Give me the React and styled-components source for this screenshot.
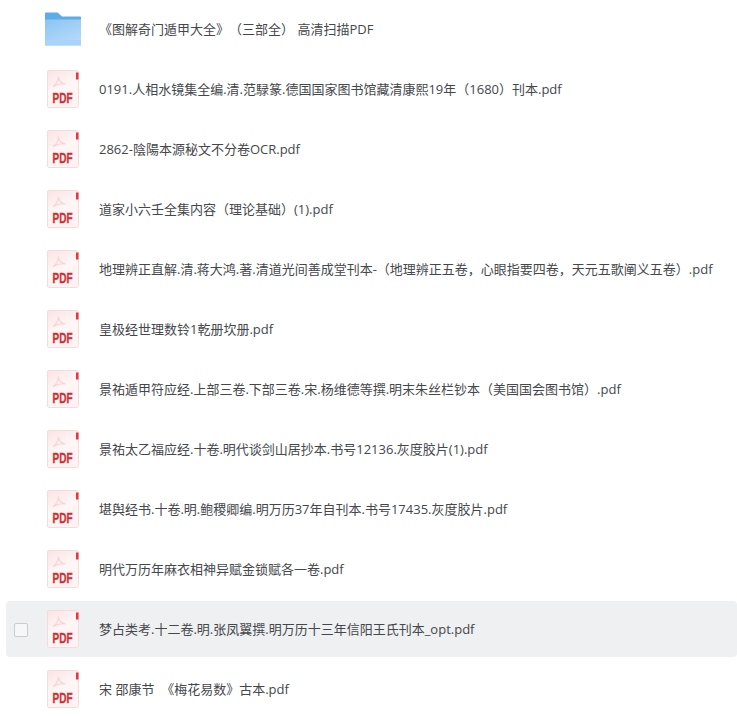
import React from 'react'
import styled, { createGlobalStyle } from 'styled-components'

const files = [
  { name: '《图解奇门遁甲大全》（三部全） 高清扫描PDF', folder: true },
  { name: '0191.人相水镜集全编.清.范騄篆.德国国家图书馆藏清康熙19年（1680）刊本.pdf' },
  { name: '2862-陰陽本源秘文不分卷OCR.pdf' },
  { name: '道家小六壬全集内容（理论基础）(1).pdf' },
  { name: '地理辨正直解.清.蒋大鸿.著.清道光间善成堂刊本-（地理辨正五卷，心眼指要四卷，天元五歌阐义五卷）.pdf' },
  { name: '皇极经世理数铃1乾册坎册.pdf' },
  { name: '景祐遁甲符应经.上部三卷.下部三卷.宋.杨维德等撰.明末朱丝栏钞本（美国国会图书馆）.pdf' },
  { name: '景祐太乙福应经.十卷.明代谈剑山居抄本.书号12136.灰度胶片(1).pdf' },
  { name: '堪舆经书.十卷.明.鲍稷卿编.明万历37年自刊本.书号17435.灰度胶片.pdf' },
  { name: '明代万历年麻衣相神异赋金锁赋各一卷.pdf' },
  { name: '梦占类考.十二卷.明.张凤翼撰.明万历十三年信阳王氏刊本_opt.pdf', active: true },
  { name: '宋 邵康节  《梅花易数》古本.pdf' },
]

function FolderIcon() {
  return (
    <svg width="36" height="34" viewBox="0 0 36 34">
      <defs>
        <linearGradient id="folderFront" x1="0" y1="0" x2="0.6" y2="1">
          <stop offset="0" stopColor="#8cc4f2" />
          <stop offset="1" stopColor="#b4d9fb" />
        </linearGradient>
      </defs>
      <path d="M0 1.5Q0 0.5 1 0.5H12.5L17 4.5H35Q36 4.5 36 5.5V12H0Z" fill="#5dacea" />
      <path d="M1.5 7.5H36V33.5H0V9Q0 7.5 1.5 7.5Z" fill="url(#folderFront)" />
      <rect x="0" y="28" width="36" height="5.5" fill="#a9d3f8" />
      <path d="M27 11.5H32M27 13.5H32" stroke="#a3cdf0" strokeWidth="1" />
    </svg>
  )
}

function PdfIcon() {
  return (
    <svg width="32" height="38" viewBox="0 0 32 38">
      <defs>
        <linearGradient id="pdfPage" x1="0" y1="0" x2="0.4" y2="1">
          <stop offset="0" stopColor="#fbe3e3" />
          <stop offset="0.55" stopColor="#fff6f6" />
          <stop offset="1" stopColor="#fff2f2" />
        </linearGradient>
      </defs>
      <path d="M2 0.5H29Q31.5 0.5 31.5 3V35.5Q31.5 37.5 29.5 37.5H2Q0.5 37.5 0.5 36V2Q0.5 0.5 2 0.5Z" fill="url(#pdfPage)" stroke="#f5dcdc" />
      <path d="M29 2.5H31.5V9.5H29Z" fill="#e0383e" />
      <path d="M6 16.5C9 14.5 11.5 10.5 11.5 6.5C11.5 9.5 13.5 13 18.5 14C15 13.5 10 14 6 16.5Z" fill="none" stroke="#f6d2d2" strokeWidth="1.1" />
      <PdfLabel x="15.5" y="33" textLength="20" lengthAdjust="spacingAndGlyphs">PDF</PdfLabel>
    </svg>
  )
}

function App() {
  return (
    <>
      <GlobalStyle />
      <List>
        {files.map((file) => (
          <Row key={file.name} $active={file.active}>
            <CheckSlot>{file.active && <Check />}</CheckSlot>
            <IconSlot>{file.folder ? <FolderIcon /> : <PdfIcon />}</IconSlot>
            <Name>{file.name}</Name>
          </Row>
        ))}
      </List>
    </>
  )
}

export default App

const GlobalStyle = createGlobalStyle`
  html, body {
    margin: 0;
    background: #fff;
    overflow: hidden;
  }
  body {
    font-family: "Open Sans", "Noto Sans CJK SC", sans-serif;
  }
`

const List = styled.div`
  height: 716px;
  padding: 1px 0 0 6px;
  box-sizing: border-box;
  overflow: hidden;
`

const Row = styled.div`
  display: flex;
  align-items: center;
  height: 56px;
  margin-bottom: 4px;
  border-radius: 4px;
  background: ${(p) => (p.$active ? '#eff0f2' : 'transparent')};
`

const CheckSlot = styled.div`
  display: flex;
  width: 14px;
  height: 14px;
  margin: 2px 0 0 8px;
`

const Check = styled.span`
  width: 14px;
  height: 14px;
  box-sizing: border-box;
  border: 1px solid #c9cbd0;
  border-radius: 2px;
  background: #f7f7f8;
`

const IconSlot = styled.div`
  display: flex;
  justify-content: center;
  align-items: center;
  width: 36px;
  height: 40px;
  margin-left: 17px;
`

const Name = styled.div`
  margin-left: 18px;
  font-size: 13px;
  line-height: 20px;
  color: #45474b;
  white-space: pre;
  text-spacing-trim: space-all;
  font-feature-settings: "chws" 0;
`

const PdfLabel = styled.text`
  font-family: "Liberation Sans", sans-serif;
  font-size: 14px;
  font-weight: 700;
  fill: #cf2f36;
  stroke: #cf2f36;
  stroke-width: 0.3px;
  text-anchor: middle;
`
